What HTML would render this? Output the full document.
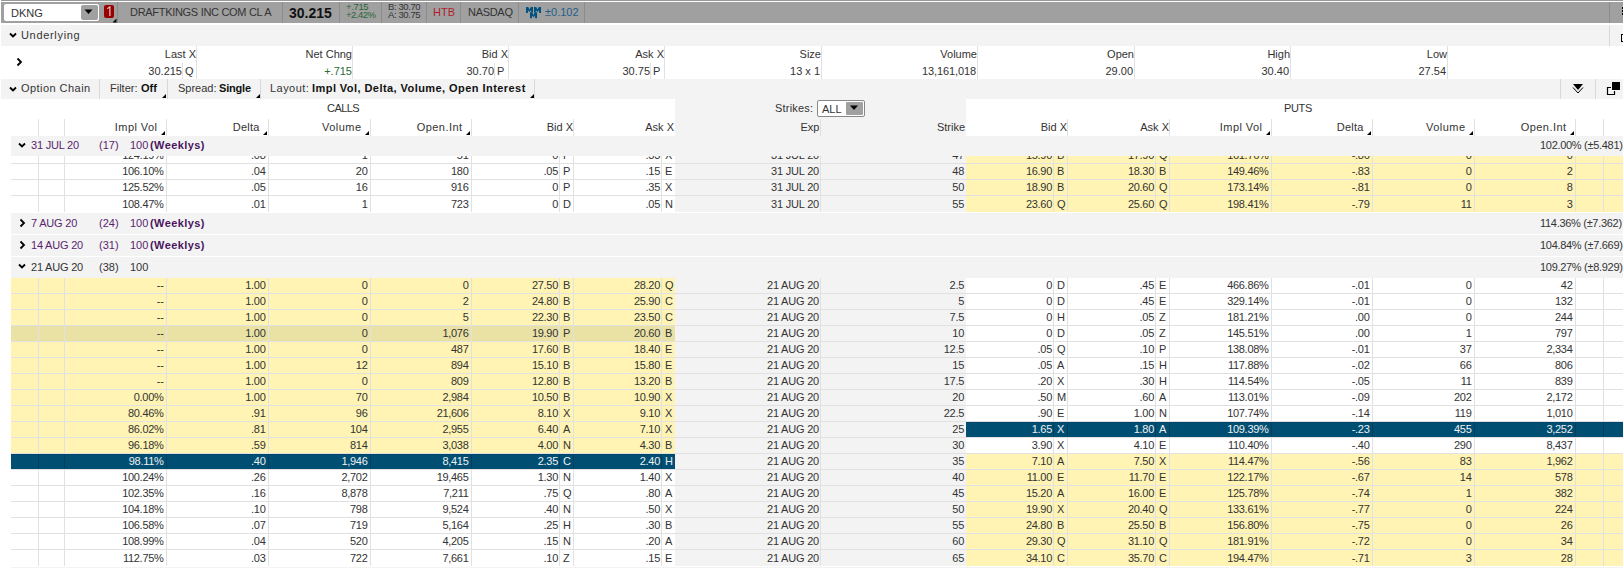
<!DOCTYPE html>
<html><head><meta charset="utf-8"><style>
html,body{margin:0;padding:0}
body{width:1623px;height:568px;overflow:hidden;background:#fff;position:relative;font-family:"Liberation Sans",sans-serif;font-size:11px;color:#333}
.a{position:absolute}
.t{position:absolute;white-space:nowrap;line-height:16px}
.r{text-align:right}
.c{text-align:center}
b{font-weight:bold}
</style></head><body>
<div class="a" style="left:1px;top:0px;width:1622px;height:1px;background:#999;"></div>
<div class="a" style="left:1px;top:2px;width:1622px;height:21px;background:#a0a0a0;"></div>
<div class="a" style="left:4px;top:4px;width:95px;height:17px;background:#fff;border-radius:2px;"></div>
<div class="a" style="left:81px;top:5px;width:17px;height:15px;background:#a0a0a0;border-radius:2px;"></div>
<svg class="a" style="left:84px;top:9px" width="9" height="6"><path d="M0.5 0.5H8.5L4.5 5Z" fill="#000"/></svg>
<div class="t" style="left:11px;top:5px;color:#333;">DKNG</div>
<div class="a" style="left:104px;top:5px;width:10px;height:13px;background:#990000;border-radius:2px;"></div>
<svg class="a" style="left:104px;top:5px" width="10" height="13"><path d="M3.2 3.6L5.9 2V11" stroke="#ddd" stroke-width="1.1" fill="none"/></svg>
<svg class="a" style="left:112px;top:18px" width="5" height="5"><path d="M4.5 0.5V4.5H0.5Z" fill="#000"/></svg>
<div class="a" style="left:117px;top:2px;width:1px;height:21px;background:#8c8c8c;"></div>
<div class="a" style="left:282px;top:2px;width:1px;height:21px;background:#8c8c8c;"></div>
<div class="a" style="left:339px;top:2px;width:1px;height:21px;background:#8c8c8c;"></div>
<div class="a" style="left:381px;top:2px;width:1px;height:21px;background:#8c8c8c;"></div>
<div class="a" style="left:426px;top:2px;width:1px;height:21px;background:#8c8c8c;"></div>
<div class="a" style="left:460px;top:2px;width:1px;height:21px;background:#8c8c8c;"></div>
<div class="a" style="left:518px;top:2px;width:1px;height:21px;background:#8c8c8c;"></div>
<div class="a" style="left:584px;top:2px;width:1px;height:21px;background:#8c8c8c;"></div>
<div class="a" style="left:1609px;top:2px;width:1px;height:21px;background:#8c8c8c;"></div>
<div class="t" style="left:130px;top:4px;color:#333;letter-spacing:-0.3px;">DRAFTKINGS INC COM CL A</div>
<div class="t" style="left:289px;top:5px;color:#111;font-weight:bold;font-size:14px;">30.215</div>
<div class="t" style="left:346px;top:-1px;color:#2a6637;font-size:9.5px;letter-spacing:-0.35px;">+.715</div>
<div class="t" style="left:346px;top:6.5px;color:#2a6637;font-size:9.5px;letter-spacing:-0.5px;">+2.42%</div>
<div class="t" style="left:388px;top:-1px;color:#333;font-size:9.5px;letter-spacing:-0.4px;">B: 30.70</div>
<div class="t" style="left:388px;top:6.5px;color:#333;font-size:9.5px;letter-spacing:-0.4px;">A: 30.75</div>
<div class="t" style="left:433px;top:4px;color:#b01c2e;">HTB</div>
<div class="t" style="left:468px;top:4px;color:#333;letter-spacing:-0.3px;">NASDAQ</div>
<svg class="a" style="left:525px;top:6px" width="18" height="14"><path fill="#00507f" d="M1 7V1H3.2L4.5 3.6L5.8 1H8V7H6.1V4L4.5 6.3L2.9 4V7ZM9 7V1H11.2L12.5 3.6L13.8 1H16V7H14.1V4L12.5 6.3L10.9 4V7Z"/><path fill="#00507f" stroke="#a0a0a0" stroke-width="0.6" paint-order="stroke" d="M5 12.3V6.3H7.2L8.5 8.9L9.8 6.3H12V12.3H10.1V9.3L8.5 11.6L6.9 9.3V12.3Z"/></svg>
<div class="t" style="left:545px;top:4px;color:#1f5f8a;">±0.102</div>
<div class="a" style="left:1px;top:25px;width:1622px;height:21px;background:#f3f3f3;"></div>
<svg class="a" style="left:9px;top:32px" width="8" height="7"><path d="M1 1.5L4 4.5L7 1.5" stroke="#000" stroke-width="1.8" fill="none"/></svg>
<div class="t" style="left:21px;top:27px;letter-spacing:0.68px;">Underlying</div>
<div class="a" style="left:1609px;top:26px;width:1px;height:20px;background:#d8d8d8;"></div>
<div class="a" style="left:1621px;top:34px;width:4px;height:6px;background:transparent;border:1px solid #000;box-sizing:content-box;"></div>
<div class="a" style="left:1622px;top:7px;width:1px;height:2px;background:#000;"></div>
<div class="a" style="left:1622px;top:10px;width:1px;height:2px;background:#000;"></div>
<div class="a" style="left:1622px;top:13px;width:1px;height:2px;background:#000;"></div>
<svg class="a" style="left:16px;top:57px" width="7" height="10"><path d="M1.5 1.5L5 5L1.5 8.5" stroke="#000" stroke-width="1.8" fill="none"/></svg>
<div class="a" style="left:196px;top:46px;width:1px;height:33px;background:#e1e1e1;"></div>
<div class="a" style="left:352px;top:46px;width:1px;height:33px;background:#e1e1e1;"></div>
<div class="a" style="left:508px;top:46px;width:1px;height:33px;background:#e1e1e1;"></div>
<div class="a" style="left:664px;top:46px;width:1px;height:33px;background:#e1e1e1;"></div>
<div class="a" style="left:821px;top:46px;width:1px;height:33px;background:#e1e1e1;"></div>
<div class="a" style="left:977px;top:46px;width:1px;height:33px;background:#e1e1e1;"></div>
<div class="a" style="left:1134px;top:46px;width:1px;height:33px;background:#e1e1e1;"></div>
<div class="a" style="left:1290px;top:46px;width:1px;height:33px;background:#e1e1e1;"></div>
<div class="a" style="left:1447px;top:46px;width:1px;height:33px;background:#e1e1e1;"></div>
<div class="a" style="left:182px;top:63px;width:1px;height:16px;background:#e1e1e1;"></div>
<div class="a" style="left:494px;top:63px;width:1px;height:16px;background:#e1e1e1;"></div>
<div class="a" style="left:650px;top:63px;width:1px;height:16px;background:#e1e1e1;"></div>
<div class="t r" style="left:-104px;top:46px;width:300px;">Last X</div>
<div class="t r" style="left:52px;top:46px;width:300px;">Net Chng</div>
<div class="t r" style="left:208px;top:46px;width:300px;">Bid X</div>
<div class="t r" style="left:364px;top:46px;width:300px;">Ask X</div>
<div class="t r" style="left:521px;top:46px;width:300px;">Size</div>
<div class="t r" style="left:677px;top:46px;width:300px;">Volume</div>
<div class="t r" style="left:834px;top:46px;width:300px;">Open</div>
<div class="t r" style="left:990px;top:46px;width:300px;">High</div>
<div class="t r" style="left:1147px;top:46px;width:300px;">Low</div>
<div class="t r" style="left:-118px;top:63px;width:300px;">30.215</div>
<div class="t" style="left:185px;top:63px;">Q</div>
<div class="t r" style="left:52px;top:63px;width:300px;color:#2e6b3a;">+.715</div>
<div class="t r" style="left:194px;top:63px;width:300px;">30.70</div>
<div class="t" style="left:497px;top:63px;">P</div>
<div class="t r" style="left:350px;top:63px;width:300px;">30.75</div>
<div class="t" style="left:653px;top:63px;">P</div>
<div class="t r" style="left:520px;top:63px;width:300px;">13 x 1</div>
<div class="t r" style="left:676px;top:63px;width:300px;letter-spacing:-0.1px;">13,161,018</div>
<div class="t r" style="left:833px;top:63px;width:300px;">29.00</div>
<div class="t r" style="left:989px;top:63px;width:300px;">30.40</div>
<div class="t r" style="left:1146px;top:63px;width:300px;">27.54</div>
<div class="a" style="left:1px;top:79px;width:1622px;height:20px;background:#f3f3f3;"></div>
<svg class="a" style="left:9px;top:86px" width="8" height="7"><path d="M1 1.5L4 4.5L7 1.5" stroke="#000" stroke-width="1.8" fill="none"/></svg>
<div class="t" style="left:21px;top:80px;letter-spacing:0.45px;">Option Chain</div>
<div class="t" style="left:110px;top:80px;letter-spacing:0px;">Filter:</div>
<div class="t" style="left:141px;top:80px;color:#111;font-weight:bold;">Off</div>
<div class="t" style="left:178px;top:80px;letter-spacing:0px;">Spread:</div>
<div class="t" style="left:219px;top:80px;color:#111;font-weight:bold;letter-spacing:-0.2px;">Single</div>
<div class="t" style="left:270px;top:80px;letter-spacing:0.45px;">Layout:</div>
<div class="t" style="left:312px;top:80px;color:#111;font-weight:bold;letter-spacing:0.44px;">Impl Vol, Delta, Volume, Open Interest</div>
<div class="a" style="left:99px;top:79px;width:1px;height:20px;background:#d8d8d8;"></div>
<div class="a" style="left:167px;top:79px;width:1px;height:20px;background:#d8d8d8;"></div>
<div class="a" style="left:260px;top:79px;width:1px;height:20px;background:#d8d8d8;"></div>
<div class="a" style="left:534px;top:79px;width:1px;height:20px;background:#d8d8d8;"></div>
<div class="a" style="left:1560px;top:79px;width:1px;height:20px;background:#d8d8d8;"></div>
<div class="a" style="left:1595px;top:79px;width:1px;height:20px;background:#d8d8d8;"></div>
<svg class="a" style="left:162px;top:94px" width="4" height="4"><path d="M4 0V4H0Z" fill="#000"/></svg>
<svg class="a" style="left:256px;top:94px" width="4" height="4"><path d="M4 0V4H0Z" fill="#000"/></svg>
<svg class="a" style="left:530px;top:94px" width="4" height="4"><path d="M4 0V4H0Z" fill="#000"/></svg>
<svg class="a" style="left:1572px;top:83px" width="12" height="11"><path d="M1 1H11L6 7Z" fill="#000"/><path d="M1 4.5L6 10L11 4.5" stroke="#000" stroke-width="1" fill="none"/></svg>
<svg class="a" style="left:1606px;top:81px" width="15" height="15"><rect x="6" y="1" width="8" height="8" fill="#000"/><path d="M5 6.5H1.5V13.5H8.5V10" stroke="#000" stroke-width="1.2" fill="none"/></svg>
<div class="a" style="left:675px;top:99px;width:291px;height:467px;background:#f3f3f3;"></div>
<div class="a" style="left:11px;top:567px;width:1612px;height:1px;background:#f3f3f3;"></div>
<div class="t c" style="left:143px;top:100px;width:400px;letter-spacing:-0.6px;">CALLS</div>
<div class="t c" style="left:1098px;top:100px;width:400px;letter-spacing:-0.3px;">PUTS</div>
<div class="t" style="left:775px;top:100px;letter-spacing:0.2px;">Strikes:</div>
<div class="a" style="left:817px;top:100px;width:46px;height:15px;background:#fff;border:1px solid #888;border-radius:2px;"></div>
<div class="t" style="left:822px;top:101px;">ALL</div>
<div class="a" style="left:846px;top:102px;width:17px;height:13px;background:#a0a0a0;border-radius:1px;"></div>
<svg class="a" style="left:850px;top:105px" width="8" height="6"><path d="M0 0.5H8L4 5Z" fill="#000"/></svg>
<div class="a" style="left:38px;top:119px;width:1px;height:17px;background:#e1e1e1;"></div>
<div class="a" style="left:64px;top:119px;width:1px;height:17px;background:#e1e1e1;"></div>
<div class="a" style="left:166px;top:119px;width:1px;height:17px;background:#e1e1e1;"></div>
<div class="a" style="left:268px;top:119px;width:1px;height:17px;background:#e1e1e1;"></div>
<div class="a" style="left:370px;top:119px;width:1px;height:17px;background:#e1e1e1;"></div>
<div class="a" style="left:471px;top:119px;width:1px;height:17px;background:#e1e1e1;"></div>
<div class="a" style="left:573px;top:119px;width:1px;height:17px;background:#e1e1e1;"></div>
<div class="a" style="left:820px;top:119px;width:1px;height:17px;background:#e1e1e1;"></div>
<div class="a" style="left:1067px;top:119px;width:1px;height:17px;background:#e1e1e1;"></div>
<div class="a" style="left:1169px;top:119px;width:1px;height:17px;background:#e1e1e1;"></div>
<div class="a" style="left:1271px;top:119px;width:1px;height:17px;background:#e1e1e1;"></div>
<div class="a" style="left:1372px;top:119px;width:1px;height:17px;background:#e1e1e1;"></div>
<div class="a" style="left:1474px;top:119px;width:1px;height:17px;background:#e1e1e1;"></div>
<div class="a" style="left:1575px;top:119px;width:1px;height:17px;background:#e1e1e1;"></div>
<div class="a" style="left:1603px;top:119px;width:1px;height:17px;background:#e1e1e1;"></div>
<div class="t r" style="left:-142.5px;top:119px;width:300px;letter-spacing:0.45px;">Impl Vol</div>
<svg class="a" style="left:161px;top:131px" width="4" height="4"><path d="M4 0V4H0Z" fill="#000"/></svg>
<div class="t r" style="left:-40.5px;top:119px;width:300px;letter-spacing:0.2px;">Delta</div>
<svg class="a" style="left:263px;top:131px" width="4" height="4"><path d="M4 0V4H0Z" fill="#000"/></svg>
<div class="t r" style="left:61.5px;top:119px;width:300px;letter-spacing:0.45px;">Volume</div>
<svg class="a" style="left:365px;top:131px" width="4" height="4"><path d="M4 0V4H0Z" fill="#000"/></svg>
<div class="t r" style="left:162.5px;top:119px;width:300px;letter-spacing:0.45px;">Open.Int</div>
<svg class="a" style="left:466px;top:131px" width="4" height="4"><path d="M4 0V4H0Z" fill="#000"/></svg>
<div class="t r" style="left:273px;top:119px;width:300px;">Bid X</div>
<div class="t r" style="left:374px;top:119px;width:300px;">Ask X</div>
<div class="t r" style="left:519.5px;top:119px;width:300px;">Exp</div>
<div class="t r" style="left:665px;top:119px;width:300px;">Strike</div>
<div class="t r" style="left:767px;top:119px;width:300px;">Bid X</div>
<div class="t r" style="left:869px;top:119px;width:300px;">Ask X</div>
<div class="t r" style="left:962.5px;top:119px;width:300px;letter-spacing:0.45px;">Impl Vol</div>
<svg class="a" style="left:1266px;top:131px" width="4" height="4"><path d="M4 0V4H0Z" fill="#000"/></svg>
<div class="t r" style="left:1063.5px;top:119px;width:300px;letter-spacing:0.2px;">Delta</div>
<svg class="a" style="left:1367px;top:131px" width="4" height="4"><path d="M4 0V4H0Z" fill="#000"/></svg>
<div class="t r" style="left:1165.5px;top:119px;width:300px;letter-spacing:0.45px;">Volume</div>
<svg class="a" style="left:1469px;top:131px" width="4" height="4"><path d="M4 0V4H0Z" fill="#000"/></svg>
<div class="t r" style="left:1266.5px;top:119px;width:300px;letter-spacing:0.45px;">Open.Int</div>
<svg class="a" style="left:1570px;top:131px" width="4" height="4"><path d="M4 0V4H0Z" fill="#000"/></svg>
<div class="a" style="left:966px;top:148px;width:657px;height:15px;background:#fff4b4;"></div>
<div class="t r" style="left:-136.5px;top:147px;width:300px;color:#333;letter-spacing:-0.3px;">124.19%</div>
<div class="t r" style="left:-34.5px;top:147px;width:300px;color:#333;letter-spacing:-0.3px;">.08</div>
<div class="t r" style="left:67.5px;top:147px;width:300px;color:#333;letter-spacing:-0.3px;">1</div>
<div class="t r" style="left:168.5px;top:147px;width:300px;color:#333;letter-spacing:-0.3px;">51</div>
<div class="t r" style="left:258px;top:147px;width:300px;color:#333;letter-spacing:-0.3px;">0</div>
<div class="t r" style="left:360px;top:147px;width:300px;color:#333;letter-spacing:-0.3px;">.33</div>
<div class="t" style="left:563px;top:147px;color:#333;">P</div>
<div class="t" style="left:665px;top:147px;color:#333;">X</div>
<div class="t r" style="left:519px;top:147px;width:300px;letter-spacing:-0.2px;">31 JUL 20</div>
<div class="t r" style="left:664px;top:147px;width:300px;letter-spacing:-0.3px;">47</div>
<div class="t r" style="left:752px;top:147px;width:300px;color:#333;letter-spacing:-0.3px;">15.90</div>
<div class="t r" style="left:854px;top:147px;width:300px;color:#333;letter-spacing:-0.3px;">17.90</div>
<div class="t r" style="left:968.5px;top:147px;width:300px;color:#333;letter-spacing:-0.3px;">161.76%</div>
<div class="t r" style="left:1069.5px;top:147px;width:300px;color:#333;letter-spacing:-0.3px;">-.86</div>
<div class="t r" style="left:1171.5px;top:147px;width:300px;color:#333;letter-spacing:-0.3px;">0</div>
<div class="t r" style="left:1272.5px;top:147px;width:300px;color:#333;letter-spacing:-0.3px;">0</div>
<div class="t" style="left:1057px;top:147px;color:#333;">B</div>
<div class="t" style="left:1159px;top:147px;color:#333;">Q</div>
<div class="a" style="left:966px;top:164px;width:657px;height:15px;background:#fff4b4;"></div>
<div class="t r" style="left:-136.5px;top:163px;width:300px;color:#333;letter-spacing:-0.3px;">106.10%</div>
<div class="t r" style="left:-34.5px;top:163px;width:300px;color:#333;letter-spacing:-0.3px;">.04</div>
<div class="t r" style="left:67.5px;top:163px;width:300px;color:#333;letter-spacing:-0.3px;">20</div>
<div class="t r" style="left:168.5px;top:163px;width:300px;color:#333;letter-spacing:-0.3px;">180</div>
<div class="t r" style="left:258px;top:163px;width:300px;color:#333;letter-spacing:-0.3px;">.05</div>
<div class="t r" style="left:360px;top:163px;width:300px;color:#333;letter-spacing:-0.3px;">.15</div>
<div class="t" style="left:563px;top:163px;color:#333;">P</div>
<div class="t" style="left:665px;top:163px;color:#333;">E</div>
<div class="t r" style="left:519px;top:163px;width:300px;letter-spacing:-0.2px;">31 JUL 20</div>
<div class="t r" style="left:664px;top:163px;width:300px;letter-spacing:-0.3px;">48</div>
<div class="t r" style="left:752px;top:163px;width:300px;color:#333;letter-spacing:-0.3px;">16.90</div>
<div class="t r" style="left:854px;top:163px;width:300px;color:#333;letter-spacing:-0.3px;">18.30</div>
<div class="t r" style="left:968.5px;top:163px;width:300px;color:#333;letter-spacing:-0.3px;">149.46%</div>
<div class="t r" style="left:1069.5px;top:163px;width:300px;color:#333;letter-spacing:-0.3px;">-.83</div>
<div class="t r" style="left:1171.5px;top:163px;width:300px;color:#333;letter-spacing:-0.3px;">0</div>
<div class="t r" style="left:1272.5px;top:163px;width:300px;color:#333;letter-spacing:-0.3px;">2</div>
<div class="t" style="left:1057px;top:163px;color:#333;">B</div>
<div class="t" style="left:1159px;top:163px;color:#333;">B</div>
<div class="a" style="left:966px;top:180px;width:657px;height:15px;background:#fff4b4;"></div>
<div class="t r" style="left:-136.5px;top:179px;width:300px;color:#333;letter-spacing:-0.3px;">125.52%</div>
<div class="t r" style="left:-34.5px;top:179px;width:300px;color:#333;letter-spacing:-0.3px;">.05</div>
<div class="t r" style="left:67.5px;top:179px;width:300px;color:#333;letter-spacing:-0.3px;">16</div>
<div class="t r" style="left:168.5px;top:179px;width:300px;color:#333;letter-spacing:-0.3px;">916</div>
<div class="t r" style="left:258px;top:179px;width:300px;color:#333;letter-spacing:-0.3px;">0</div>
<div class="t r" style="left:360px;top:179px;width:300px;color:#333;letter-spacing:-0.3px;">.35</div>
<div class="t" style="left:563px;top:179px;color:#333;">P</div>
<div class="t" style="left:665px;top:179px;color:#333;">X</div>
<div class="t r" style="left:519px;top:179px;width:300px;letter-spacing:-0.2px;">31 JUL 20</div>
<div class="t r" style="left:664px;top:179px;width:300px;letter-spacing:-0.3px;">50</div>
<div class="t r" style="left:752px;top:179px;width:300px;color:#333;letter-spacing:-0.3px;">18.90</div>
<div class="t r" style="left:854px;top:179px;width:300px;color:#333;letter-spacing:-0.3px;">20.60</div>
<div class="t r" style="left:968.5px;top:179px;width:300px;color:#333;letter-spacing:-0.3px;">173.14%</div>
<div class="t r" style="left:1069.5px;top:179px;width:300px;color:#333;letter-spacing:-0.3px;">-.81</div>
<div class="t r" style="left:1171.5px;top:179px;width:300px;color:#333;letter-spacing:-0.3px;">0</div>
<div class="t r" style="left:1272.5px;top:179px;width:300px;color:#333;letter-spacing:-0.3px;">8</div>
<div class="t" style="left:1057px;top:179px;color:#333;">B</div>
<div class="t" style="left:1159px;top:179px;color:#333;">Q</div>
<div class="a" style="left:966px;top:196px;width:657px;height:16px;background:#fff4b4;"></div>
<div class="t r" style="left:-136.5px;top:196px;width:300px;color:#333;letter-spacing:-0.3px;">108.47%</div>
<div class="t r" style="left:-34.5px;top:196px;width:300px;color:#333;letter-spacing:-0.3px;">.01</div>
<div class="t r" style="left:67.5px;top:196px;width:300px;color:#333;letter-spacing:-0.3px;">1</div>
<div class="t r" style="left:168.5px;top:196px;width:300px;color:#333;letter-spacing:-0.3px;">723</div>
<div class="t r" style="left:258px;top:196px;width:300px;color:#333;letter-spacing:-0.3px;">0</div>
<div class="t r" style="left:360px;top:196px;width:300px;color:#333;letter-spacing:-0.3px;">.05</div>
<div class="t" style="left:563px;top:196px;color:#333;">D</div>
<div class="t" style="left:665px;top:196px;color:#333;">N</div>
<div class="t r" style="left:519px;top:196px;width:300px;letter-spacing:-0.2px;">31 JUL 20</div>
<div class="t r" style="left:664px;top:196px;width:300px;letter-spacing:-0.3px;">55</div>
<div class="t r" style="left:752px;top:196px;width:300px;color:#333;letter-spacing:-0.3px;">23.60</div>
<div class="t r" style="left:854px;top:196px;width:300px;color:#333;letter-spacing:-0.3px;">25.60</div>
<div class="t r" style="left:968.5px;top:196px;width:300px;color:#333;letter-spacing:-0.3px;">198.41%</div>
<div class="t r" style="left:1069.5px;top:196px;width:300px;color:#333;letter-spacing:-0.3px;">-.79</div>
<div class="t r" style="left:1171.5px;top:196px;width:300px;color:#333;letter-spacing:-0.3px;">11</div>
<div class="t r" style="left:1272.5px;top:196px;width:300px;color:#333;letter-spacing:-0.3px;">3</div>
<div class="t" style="left:1057px;top:196px;color:#333;">Q</div>
<div class="t" style="left:1159px;top:196px;color:#333;">Q</div>
<div class="a" style="left:11px;top:163px;width:1612px;height:1px;background:#e1e1e1;"></div>
<div class="a" style="left:11px;top:179px;width:1612px;height:1px;background:#e1e1e1;"></div>
<div class="a" style="left:11px;top:195px;width:1612px;height:1px;background:#e1e1e1;"></div>
<div class="a" style="left:38px;top:148px;width:1px;height:64px;background:#e1e1e1;"></div>
<div class="a" style="left:64px;top:148px;width:1px;height:64px;background:#e1e1e1;"></div>
<div class="a" style="left:166px;top:148px;width:1px;height:64px;background:#e1e1e1;"></div>
<div class="a" style="left:268px;top:148px;width:1px;height:64px;background:#e1e1e1;"></div>
<div class="a" style="left:370px;top:148px;width:1px;height:64px;background:#e1e1e1;"></div>
<div class="a" style="left:471px;top:148px;width:1px;height:64px;background:#e1e1e1;"></div>
<div class="a" style="left:559px;top:148px;width:1px;height:64px;background:#e1e1e1;"></div>
<div class="a" style="left:573px;top:148px;width:1px;height:64px;background:#e1e1e1;"></div>
<div class="a" style="left:661px;top:148px;width:1px;height:64px;background:#e1e1e1;"></div>
<div class="a" style="left:820px;top:148px;width:1px;height:64px;background:#e1e1e1;"></div>
<div class="a" style="left:1053px;top:148px;width:1px;height:64px;background:#e1e1e1;"></div>
<div class="a" style="left:1067px;top:148px;width:1px;height:64px;background:#e1e1e1;"></div>
<div class="a" style="left:1155px;top:148px;width:1px;height:64px;background:#e1e1e1;"></div>
<div class="a" style="left:1169px;top:148px;width:1px;height:64px;background:#e1e1e1;"></div>
<div class="a" style="left:1271px;top:148px;width:1px;height:64px;background:#e1e1e1;"></div>
<div class="a" style="left:1372px;top:148px;width:1px;height:64px;background:#e1e1e1;"></div>
<div class="a" style="left:1474px;top:148px;width:1px;height:64px;background:#e1e1e1;"></div>
<div class="a" style="left:1575px;top:148px;width:1px;height:64px;background:#e1e1e1;"></div>
<div class="a" style="left:1603px;top:148px;width:1px;height:64px;background:#e1e1e1;"></div>
<div class="a" style="left:11px;top:136px;width:1612px;height:20px;background:#f3f3f3;"></div>
<svg class="a" style="left:18px;top:142px" width="8" height="7"><path d="M1 1.5L4 4.5L7 1.5" stroke="#000" stroke-width="1.8" fill="none"/></svg>
<div class="t" style="left:31px;top:137px;color:#5a1f6e;letter-spacing:-0.2px;">31 JUL 20</div>
<div class="t" style="left:99px;top:137px;color:#5a1f6e;">(17)</div>
<div class="t" style="left:130px;top:137px;color:#5a1f6e;">100</div>
<div class="t" style="left:150px;top:137px;color:#4a1660;font-weight:bold;letter-spacing:0.4px;">(Weeklys)</div>
<div class="t" style="left:1540px;top:137px;letter-spacing:-0.3px;">102.00% (±5.481)</div>
<div class="a" style="left:11px;top:213px;width:1612px;height:21px;background:#f3f3f3;"></div>
<svg class="a" style="left:19px;top:218px" width="7" height="10"><path d="M1.5 1.5L5 5L1.5 8.5" stroke="#000" stroke-width="1.8" fill="none"/></svg>
<div class="t" style="left:31px;top:215px;color:#5a1f6e;letter-spacing:-0.2px;">7 AUG 20</div>
<div class="t" style="left:99px;top:215px;color:#5a1f6e;">(24)</div>
<div class="t" style="left:130px;top:215px;color:#5a1f6e;">100</div>
<div class="t" style="left:150px;top:215px;color:#4a1660;font-weight:bold;letter-spacing:0.4px;">(Weeklys)</div>
<div class="t" style="left:1540px;top:215px;letter-spacing:-0.3px;">114.36% (±7.362)</div>
<div class="a" style="left:11px;top:235px;width:1612px;height:21px;background:#f3f3f3;"></div>
<svg class="a" style="left:19px;top:240px" width="7" height="10"><path d="M1.5 1.5L5 5L1.5 8.5" stroke="#000" stroke-width="1.8" fill="none"/></svg>
<div class="t" style="left:31px;top:237px;color:#5a1f6e;letter-spacing:-0.2px;">14 AUG 20</div>
<div class="t" style="left:99px;top:237px;color:#5a1f6e;">(31)</div>
<div class="t" style="left:130px;top:237px;color:#5a1f6e;">100</div>
<div class="t" style="left:150px;top:237px;color:#4a1660;font-weight:bold;letter-spacing:0.4px;">(Weeklys)</div>
<div class="t" style="left:1540px;top:237px;letter-spacing:-0.3px;">104.84% (±7.669)</div>
<div class="a" style="left:11px;top:257px;width:1612px;height:21px;background:#f3f3f3;"></div>
<svg class="a" style="left:18px;top:263px" width="8" height="7"><path d="M1 1.5L4 4.5L7 1.5" stroke="#000" stroke-width="1.8" fill="none"/></svg>
<div class="t" style="left:31px;top:259px;color:#333;letter-spacing:-0.2px;">21 AUG 20</div>
<div class="t" style="left:99px;top:259px;color:#333;">(38)</div>
<div class="t" style="left:130px;top:259px;color:#333;">100</div>
<div class="t" style="left:1540px;top:259px;letter-spacing:-0.3px;">109.27% (±8.929)</div>
<div class="a" style="left:11px;top:278px;width:664px;height:15px;background:#fff4b4;"></div>
<div class="t r" style="left:-136.5px;top:277px;width:300px;color:#333;letter-spacing:-0.3px;">--</div>
<div class="t r" style="left:-34.5px;top:277px;width:300px;color:#333;letter-spacing:-0.3px;">1.00</div>
<div class="t r" style="left:67.5px;top:277px;width:300px;color:#333;letter-spacing:-0.3px;">0</div>
<div class="t r" style="left:168.5px;top:277px;width:300px;color:#333;letter-spacing:-0.3px;">0</div>
<div class="t r" style="left:258px;top:277px;width:300px;color:#333;letter-spacing:-0.3px;">27.50</div>
<div class="t r" style="left:360px;top:277px;width:300px;color:#333;letter-spacing:-0.3px;">28.20</div>
<div class="t" style="left:563px;top:277px;color:#333;">B</div>
<div class="t" style="left:665px;top:277px;color:#333;">Q</div>
<div class="t r" style="left:519px;top:277px;width:300px;letter-spacing:-0.2px;">21 AUG 20</div>
<div class="t r" style="left:664px;top:277px;width:300px;letter-spacing:-0.3px;">2.5</div>
<div class="t r" style="left:752px;top:277px;width:300px;color:#333;letter-spacing:-0.3px;">0</div>
<div class="t r" style="left:854px;top:277px;width:300px;color:#333;letter-spacing:-0.3px;">.45</div>
<div class="t r" style="left:968.5px;top:277px;width:300px;color:#333;letter-spacing:-0.3px;">466.86%</div>
<div class="t r" style="left:1069.5px;top:277px;width:300px;color:#333;letter-spacing:-0.3px;">-.01</div>
<div class="t r" style="left:1171.5px;top:277px;width:300px;color:#333;letter-spacing:-0.3px;">0</div>
<div class="t r" style="left:1272.5px;top:277px;width:300px;color:#333;letter-spacing:-0.3px;">42</div>
<div class="t" style="left:1057px;top:277px;color:#333;">D</div>
<div class="t" style="left:1159px;top:277px;color:#333;">E</div>
<div class="a" style="left:11px;top:294px;width:664px;height:15px;background:#fff4b4;"></div>
<div class="t r" style="left:-136.5px;top:293px;width:300px;color:#333;letter-spacing:-0.3px;">--</div>
<div class="t r" style="left:-34.5px;top:293px;width:300px;color:#333;letter-spacing:-0.3px;">1.00</div>
<div class="t r" style="left:67.5px;top:293px;width:300px;color:#333;letter-spacing:-0.3px;">0</div>
<div class="t r" style="left:168.5px;top:293px;width:300px;color:#333;letter-spacing:-0.3px;">2</div>
<div class="t r" style="left:258px;top:293px;width:300px;color:#333;letter-spacing:-0.3px;">24.80</div>
<div class="t r" style="left:360px;top:293px;width:300px;color:#333;letter-spacing:-0.3px;">25.90</div>
<div class="t" style="left:563px;top:293px;color:#333;">B</div>
<div class="t" style="left:665px;top:293px;color:#333;">C</div>
<div class="t r" style="left:519px;top:293px;width:300px;letter-spacing:-0.2px;">21 AUG 20</div>
<div class="t r" style="left:664px;top:293px;width:300px;letter-spacing:-0.3px;">5</div>
<div class="t r" style="left:752px;top:293px;width:300px;color:#333;letter-spacing:-0.3px;">0</div>
<div class="t r" style="left:854px;top:293px;width:300px;color:#333;letter-spacing:-0.3px;">.45</div>
<div class="t r" style="left:968.5px;top:293px;width:300px;color:#333;letter-spacing:-0.3px;">329.14%</div>
<div class="t r" style="left:1069.5px;top:293px;width:300px;color:#333;letter-spacing:-0.3px;">-.01</div>
<div class="t r" style="left:1171.5px;top:293px;width:300px;color:#333;letter-spacing:-0.3px;">0</div>
<div class="t r" style="left:1272.5px;top:293px;width:300px;color:#333;letter-spacing:-0.3px;">132</div>
<div class="t" style="left:1057px;top:293px;color:#333;">D</div>
<div class="t" style="left:1159px;top:293px;color:#333;">E</div>
<div class="a" style="left:11px;top:310px;width:664px;height:15px;background:#fff4b4;"></div>
<div class="t r" style="left:-136.5px;top:309px;width:300px;color:#333;letter-spacing:-0.3px;">--</div>
<div class="t r" style="left:-34.5px;top:309px;width:300px;color:#333;letter-spacing:-0.3px;">1.00</div>
<div class="t r" style="left:67.5px;top:309px;width:300px;color:#333;letter-spacing:-0.3px;">0</div>
<div class="t r" style="left:168.5px;top:309px;width:300px;color:#333;letter-spacing:-0.3px;">5</div>
<div class="t r" style="left:258px;top:309px;width:300px;color:#333;letter-spacing:-0.3px;">22.30</div>
<div class="t r" style="left:360px;top:309px;width:300px;color:#333;letter-spacing:-0.3px;">23.50</div>
<div class="t" style="left:563px;top:309px;color:#333;">B</div>
<div class="t" style="left:665px;top:309px;color:#333;">C</div>
<div class="t r" style="left:519px;top:309px;width:300px;letter-spacing:-0.2px;">21 AUG 20</div>
<div class="t r" style="left:664px;top:309px;width:300px;letter-spacing:-0.3px;">7.5</div>
<div class="t r" style="left:752px;top:309px;width:300px;color:#333;letter-spacing:-0.3px;">0</div>
<div class="t r" style="left:854px;top:309px;width:300px;color:#333;letter-spacing:-0.3px;">.05</div>
<div class="t r" style="left:968.5px;top:309px;width:300px;color:#333;letter-spacing:-0.3px;">181.21%</div>
<div class="t r" style="left:1069.5px;top:309px;width:300px;color:#333;letter-spacing:-0.3px;">.00</div>
<div class="t r" style="left:1171.5px;top:309px;width:300px;color:#333;letter-spacing:-0.3px;">0</div>
<div class="t r" style="left:1272.5px;top:309px;width:300px;color:#333;letter-spacing:-0.3px;">244</div>
<div class="t" style="left:1057px;top:309px;color:#333;">H</div>
<div class="t" style="left:1159px;top:309px;color:#333;">Z</div>
<div class="a" style="left:11px;top:326px;width:664px;height:15px;background:#eae2a5;"></div>
<div class="t r" style="left:-136.5px;top:325px;width:300px;color:#333;letter-spacing:-0.3px;">--</div>
<div class="t r" style="left:-34.5px;top:325px;width:300px;color:#333;letter-spacing:-0.3px;">1.00</div>
<div class="t r" style="left:67.5px;top:325px;width:300px;color:#333;letter-spacing:-0.3px;">0</div>
<div class="t r" style="left:168.5px;top:325px;width:300px;color:#333;letter-spacing:-0.3px;">1,076</div>
<div class="t r" style="left:258px;top:325px;width:300px;color:#333;letter-spacing:-0.3px;">19.90</div>
<div class="t r" style="left:360px;top:325px;width:300px;color:#333;letter-spacing:-0.3px;">20.60</div>
<div class="t" style="left:563px;top:325px;color:#333;">P</div>
<div class="t" style="left:665px;top:325px;color:#333;">B</div>
<div class="t r" style="left:519px;top:325px;width:300px;letter-spacing:-0.2px;">21 AUG 20</div>
<div class="t r" style="left:664px;top:325px;width:300px;letter-spacing:-0.3px;">10</div>
<div class="t r" style="left:752px;top:325px;width:300px;color:#333;letter-spacing:-0.3px;">0</div>
<div class="t r" style="left:854px;top:325px;width:300px;color:#333;letter-spacing:-0.3px;">.05</div>
<div class="t r" style="left:968.5px;top:325px;width:300px;color:#333;letter-spacing:-0.3px;">145.51%</div>
<div class="t r" style="left:1069.5px;top:325px;width:300px;color:#333;letter-spacing:-0.3px;">.00</div>
<div class="t r" style="left:1171.5px;top:325px;width:300px;color:#333;letter-spacing:-0.3px;">1</div>
<div class="t r" style="left:1272.5px;top:325px;width:300px;color:#333;letter-spacing:-0.3px;">797</div>
<div class="t" style="left:1057px;top:325px;color:#333;">D</div>
<div class="t" style="left:1159px;top:325px;color:#333;">Z</div>
<div class="a" style="left:11px;top:342px;width:664px;height:15px;background:#fff4b4;"></div>
<div class="t r" style="left:-136.5px;top:341px;width:300px;color:#333;letter-spacing:-0.3px;">--</div>
<div class="t r" style="left:-34.5px;top:341px;width:300px;color:#333;letter-spacing:-0.3px;">1.00</div>
<div class="t r" style="left:67.5px;top:341px;width:300px;color:#333;letter-spacing:-0.3px;">0</div>
<div class="t r" style="left:168.5px;top:341px;width:300px;color:#333;letter-spacing:-0.3px;">487</div>
<div class="t r" style="left:258px;top:341px;width:300px;color:#333;letter-spacing:-0.3px;">17.60</div>
<div class="t r" style="left:360px;top:341px;width:300px;color:#333;letter-spacing:-0.3px;">18.40</div>
<div class="t" style="left:563px;top:341px;color:#333;">B</div>
<div class="t" style="left:665px;top:341px;color:#333;">E</div>
<div class="t r" style="left:519px;top:341px;width:300px;letter-spacing:-0.2px;">21 AUG 20</div>
<div class="t r" style="left:664px;top:341px;width:300px;letter-spacing:-0.3px;">12.5</div>
<div class="t r" style="left:752px;top:341px;width:300px;color:#333;letter-spacing:-0.3px;">.05</div>
<div class="t r" style="left:854px;top:341px;width:300px;color:#333;letter-spacing:-0.3px;">.10</div>
<div class="t r" style="left:968.5px;top:341px;width:300px;color:#333;letter-spacing:-0.3px;">138.08%</div>
<div class="t r" style="left:1069.5px;top:341px;width:300px;color:#333;letter-spacing:-0.3px;">-.01</div>
<div class="t r" style="left:1171.5px;top:341px;width:300px;color:#333;letter-spacing:-0.3px;">37</div>
<div class="t r" style="left:1272.5px;top:341px;width:300px;color:#333;letter-spacing:-0.3px;">2,334</div>
<div class="t" style="left:1057px;top:341px;color:#333;">Q</div>
<div class="t" style="left:1159px;top:341px;color:#333;">P</div>
<div class="a" style="left:11px;top:358px;width:664px;height:15px;background:#fff4b4;"></div>
<div class="t r" style="left:-136.5px;top:357px;width:300px;color:#333;letter-spacing:-0.3px;">--</div>
<div class="t r" style="left:-34.5px;top:357px;width:300px;color:#333;letter-spacing:-0.3px;">1.00</div>
<div class="t r" style="left:67.5px;top:357px;width:300px;color:#333;letter-spacing:-0.3px;">12</div>
<div class="t r" style="left:168.5px;top:357px;width:300px;color:#333;letter-spacing:-0.3px;">894</div>
<div class="t r" style="left:258px;top:357px;width:300px;color:#333;letter-spacing:-0.3px;">15.10</div>
<div class="t r" style="left:360px;top:357px;width:300px;color:#333;letter-spacing:-0.3px;">15.80</div>
<div class="t" style="left:563px;top:357px;color:#333;">B</div>
<div class="t" style="left:665px;top:357px;color:#333;">E</div>
<div class="t r" style="left:519px;top:357px;width:300px;letter-spacing:-0.2px;">21 AUG 20</div>
<div class="t r" style="left:664px;top:357px;width:300px;letter-spacing:-0.3px;">15</div>
<div class="t r" style="left:752px;top:357px;width:300px;color:#333;letter-spacing:-0.3px;">.05</div>
<div class="t r" style="left:854px;top:357px;width:300px;color:#333;letter-spacing:-0.3px;">.15</div>
<div class="t r" style="left:968.5px;top:357px;width:300px;color:#333;letter-spacing:-0.3px;">117.88%</div>
<div class="t r" style="left:1069.5px;top:357px;width:300px;color:#333;letter-spacing:-0.3px;">-.02</div>
<div class="t r" style="left:1171.5px;top:357px;width:300px;color:#333;letter-spacing:-0.3px;">66</div>
<div class="t r" style="left:1272.5px;top:357px;width:300px;color:#333;letter-spacing:-0.3px;">806</div>
<div class="t" style="left:1057px;top:357px;color:#333;">A</div>
<div class="t" style="left:1159px;top:357px;color:#333;">H</div>
<div class="a" style="left:11px;top:374px;width:664px;height:15px;background:#fff4b4;"></div>
<div class="t r" style="left:-136.5px;top:373px;width:300px;color:#333;letter-spacing:-0.3px;">--</div>
<div class="t r" style="left:-34.5px;top:373px;width:300px;color:#333;letter-spacing:-0.3px;">1.00</div>
<div class="t r" style="left:67.5px;top:373px;width:300px;color:#333;letter-spacing:-0.3px;">0</div>
<div class="t r" style="left:168.5px;top:373px;width:300px;color:#333;letter-spacing:-0.3px;">809</div>
<div class="t r" style="left:258px;top:373px;width:300px;color:#333;letter-spacing:-0.3px;">12.80</div>
<div class="t r" style="left:360px;top:373px;width:300px;color:#333;letter-spacing:-0.3px;">13.20</div>
<div class="t" style="left:563px;top:373px;color:#333;">B</div>
<div class="t" style="left:665px;top:373px;color:#333;">B</div>
<div class="t r" style="left:519px;top:373px;width:300px;letter-spacing:-0.2px;">21 AUG 20</div>
<div class="t r" style="left:664px;top:373px;width:300px;letter-spacing:-0.3px;">17.5</div>
<div class="t r" style="left:752px;top:373px;width:300px;color:#333;letter-spacing:-0.3px;">.20</div>
<div class="t r" style="left:854px;top:373px;width:300px;color:#333;letter-spacing:-0.3px;">.30</div>
<div class="t r" style="left:968.5px;top:373px;width:300px;color:#333;letter-spacing:-0.3px;">114.54%</div>
<div class="t r" style="left:1069.5px;top:373px;width:300px;color:#333;letter-spacing:-0.3px;">-.05</div>
<div class="t r" style="left:1171.5px;top:373px;width:300px;color:#333;letter-spacing:-0.3px;">11</div>
<div class="t r" style="left:1272.5px;top:373px;width:300px;color:#333;letter-spacing:-0.3px;">839</div>
<div class="t" style="left:1057px;top:373px;color:#333;">X</div>
<div class="t" style="left:1159px;top:373px;color:#333;">H</div>
<div class="a" style="left:11px;top:390px;width:664px;height:15px;background:#fff4b4;"></div>
<div class="t r" style="left:-136.5px;top:389px;width:300px;color:#333;letter-spacing:-0.3px;">0.00%</div>
<div class="t r" style="left:-34.5px;top:389px;width:300px;color:#333;letter-spacing:-0.3px;">1.00</div>
<div class="t r" style="left:67.5px;top:389px;width:300px;color:#333;letter-spacing:-0.3px;">70</div>
<div class="t r" style="left:168.5px;top:389px;width:300px;color:#333;letter-spacing:-0.3px;">2,984</div>
<div class="t r" style="left:258px;top:389px;width:300px;color:#333;letter-spacing:-0.3px;">10.50</div>
<div class="t r" style="left:360px;top:389px;width:300px;color:#333;letter-spacing:-0.3px;">10.90</div>
<div class="t" style="left:563px;top:389px;color:#333;">B</div>
<div class="t" style="left:665px;top:389px;color:#333;">X</div>
<div class="t r" style="left:519px;top:389px;width:300px;letter-spacing:-0.2px;">21 AUG 20</div>
<div class="t r" style="left:664px;top:389px;width:300px;letter-spacing:-0.3px;">20</div>
<div class="t r" style="left:752px;top:389px;width:300px;color:#333;letter-spacing:-0.3px;">.50</div>
<div class="t r" style="left:854px;top:389px;width:300px;color:#333;letter-spacing:-0.3px;">.60</div>
<div class="t r" style="left:968.5px;top:389px;width:300px;color:#333;letter-spacing:-0.3px;">113.01%</div>
<div class="t r" style="left:1069.5px;top:389px;width:300px;color:#333;letter-spacing:-0.3px;">-.09</div>
<div class="t r" style="left:1171.5px;top:389px;width:300px;color:#333;letter-spacing:-0.3px;">202</div>
<div class="t r" style="left:1272.5px;top:389px;width:300px;color:#333;letter-spacing:-0.3px;">2,172</div>
<div class="t" style="left:1057px;top:389px;color:#333;">M</div>
<div class="t" style="left:1159px;top:389px;color:#333;">A</div>
<div class="a" style="left:11px;top:406px;width:664px;height:15px;background:#fff4b4;"></div>
<div class="t r" style="left:-136.5px;top:405px;width:300px;color:#333;letter-spacing:-0.3px;">80.46%</div>
<div class="t r" style="left:-34.5px;top:405px;width:300px;color:#333;letter-spacing:-0.3px;">.91</div>
<div class="t r" style="left:67.5px;top:405px;width:300px;color:#333;letter-spacing:-0.3px;">96</div>
<div class="t r" style="left:168.5px;top:405px;width:300px;color:#333;letter-spacing:-0.3px;">21,606</div>
<div class="t r" style="left:258px;top:405px;width:300px;color:#333;letter-spacing:-0.3px;">8.10</div>
<div class="t r" style="left:360px;top:405px;width:300px;color:#333;letter-spacing:-0.3px;">9.10</div>
<div class="t" style="left:563px;top:405px;color:#333;">X</div>
<div class="t" style="left:665px;top:405px;color:#333;">X</div>
<div class="t r" style="left:519px;top:405px;width:300px;letter-spacing:-0.2px;">21 AUG 20</div>
<div class="t r" style="left:664px;top:405px;width:300px;letter-spacing:-0.3px;">22.5</div>
<div class="t r" style="left:752px;top:405px;width:300px;color:#333;letter-spacing:-0.3px;">.90</div>
<div class="t r" style="left:854px;top:405px;width:300px;color:#333;letter-spacing:-0.3px;">1.00</div>
<div class="t r" style="left:968.5px;top:405px;width:300px;color:#333;letter-spacing:-0.3px;">107.74%</div>
<div class="t r" style="left:1069.5px;top:405px;width:300px;color:#333;letter-spacing:-0.3px;">-.14</div>
<div class="t r" style="left:1171.5px;top:405px;width:300px;color:#333;letter-spacing:-0.3px;">119</div>
<div class="t r" style="left:1272.5px;top:405px;width:300px;color:#333;letter-spacing:-0.3px;">1,010</div>
<div class="t" style="left:1057px;top:405px;color:#333;">E</div>
<div class="t" style="left:1159px;top:405px;color:#333;">N</div>
<div class="a" style="left:11px;top:422px;width:664px;height:15px;background:#fff4b4;"></div>
<div class="a" style="left:966px;top:422px;width:657px;height:15px;background:#004f73;"></div>
<div class="t r" style="left:-136.5px;top:421px;width:300px;color:#333;letter-spacing:-0.3px;">86.02%</div>
<div class="t r" style="left:-34.5px;top:421px;width:300px;color:#333;letter-spacing:-0.3px;">.81</div>
<div class="t r" style="left:67.5px;top:421px;width:300px;color:#333;letter-spacing:-0.3px;">104</div>
<div class="t r" style="left:168.5px;top:421px;width:300px;color:#333;letter-spacing:-0.3px;">2,955</div>
<div class="t r" style="left:258px;top:421px;width:300px;color:#333;letter-spacing:-0.3px;">6.40</div>
<div class="t r" style="left:360px;top:421px;width:300px;color:#333;letter-spacing:-0.3px;">7.10</div>
<div class="t" style="left:563px;top:421px;color:#333;">A</div>
<div class="t" style="left:665px;top:421px;color:#333;">X</div>
<div class="t r" style="left:519px;top:421px;width:300px;letter-spacing:-0.2px;">21 AUG 20</div>
<div class="t r" style="left:664px;top:421px;width:300px;letter-spacing:-0.3px;">25</div>
<div class="t r" style="left:752px;top:421px;width:300px;color:#f0f0f0;letter-spacing:-0.3px;">1.65</div>
<div class="t r" style="left:854px;top:421px;width:300px;color:#f0f0f0;letter-spacing:-0.3px;">1.80</div>
<div class="t r" style="left:968.5px;top:421px;width:300px;color:#f0f0f0;letter-spacing:-0.3px;">109.39%</div>
<div class="t r" style="left:1069.5px;top:421px;width:300px;color:#f0f0f0;letter-spacing:-0.3px;">-.23</div>
<div class="t r" style="left:1171.5px;top:421px;width:300px;color:#f0f0f0;letter-spacing:-0.3px;">455</div>
<div class="t r" style="left:1272.5px;top:421px;width:300px;color:#f0f0f0;letter-spacing:-0.3px;">3,252</div>
<div class="t" style="left:1057px;top:421px;color:#f0f0f0;">X</div>
<div class="t" style="left:1159px;top:421px;color:#f0f0f0;">A</div>
<div class="a" style="left:11px;top:438px;width:664px;height:15px;background:#fff4b4;"></div>
<div class="t r" style="left:-136.5px;top:437px;width:300px;color:#333;letter-spacing:-0.3px;">96.18%</div>
<div class="t r" style="left:-34.5px;top:437px;width:300px;color:#333;letter-spacing:-0.3px;">.59</div>
<div class="t r" style="left:67.5px;top:437px;width:300px;color:#333;letter-spacing:-0.3px;">814</div>
<div class="t r" style="left:168.5px;top:437px;width:300px;color:#333;letter-spacing:-0.3px;">3,038</div>
<div class="t r" style="left:258px;top:437px;width:300px;color:#333;letter-spacing:-0.3px;">4.00</div>
<div class="t r" style="left:360px;top:437px;width:300px;color:#333;letter-spacing:-0.3px;">4.30</div>
<div class="t" style="left:563px;top:437px;color:#333;">N</div>
<div class="t" style="left:665px;top:437px;color:#333;">B</div>
<div class="t r" style="left:519px;top:437px;width:300px;letter-spacing:-0.2px;">21 AUG 20</div>
<div class="t r" style="left:664px;top:437px;width:300px;letter-spacing:-0.3px;">30</div>
<div class="t r" style="left:752px;top:437px;width:300px;color:#333;letter-spacing:-0.3px;">3.90</div>
<div class="t r" style="left:854px;top:437px;width:300px;color:#333;letter-spacing:-0.3px;">4.10</div>
<div class="t r" style="left:968.5px;top:437px;width:300px;color:#333;letter-spacing:-0.3px;">110.40%</div>
<div class="t r" style="left:1069.5px;top:437px;width:300px;color:#333;letter-spacing:-0.3px;">-.40</div>
<div class="t r" style="left:1171.5px;top:437px;width:300px;color:#333;letter-spacing:-0.3px;">290</div>
<div class="t r" style="left:1272.5px;top:437px;width:300px;color:#333;letter-spacing:-0.3px;">8,437</div>
<div class="t" style="left:1057px;top:437px;color:#333;">X</div>
<div class="t" style="left:1159px;top:437px;color:#333;">E</div>
<div class="a" style="left:11px;top:454px;width:664px;height:15px;background:#004f73;"></div>
<div class="a" style="left:966px;top:454px;width:657px;height:15px;background:#fff4b4;"></div>
<div class="t r" style="left:-136.5px;top:453px;width:300px;color:#f0f0f0;letter-spacing:-0.3px;">98.11%</div>
<div class="t r" style="left:-34.5px;top:453px;width:300px;color:#f0f0f0;letter-spacing:-0.3px;">.40</div>
<div class="t r" style="left:67.5px;top:453px;width:300px;color:#f0f0f0;letter-spacing:-0.3px;">1,946</div>
<div class="t r" style="left:168.5px;top:453px;width:300px;color:#f0f0f0;letter-spacing:-0.3px;">8,415</div>
<div class="t r" style="left:258px;top:453px;width:300px;color:#f0f0f0;letter-spacing:-0.3px;">2.35</div>
<div class="t r" style="left:360px;top:453px;width:300px;color:#f0f0f0;letter-spacing:-0.3px;">2.40</div>
<div class="t" style="left:563px;top:453px;color:#f0f0f0;">C</div>
<div class="t" style="left:665px;top:453px;color:#f0f0f0;">H</div>
<div class="t r" style="left:519px;top:453px;width:300px;letter-spacing:-0.2px;">21 AUG 20</div>
<div class="t r" style="left:664px;top:453px;width:300px;letter-spacing:-0.3px;">35</div>
<div class="t r" style="left:752px;top:453px;width:300px;color:#333;letter-spacing:-0.3px;">7.10</div>
<div class="t r" style="left:854px;top:453px;width:300px;color:#333;letter-spacing:-0.3px;">7.50</div>
<div class="t r" style="left:968.5px;top:453px;width:300px;color:#333;letter-spacing:-0.3px;">114.47%</div>
<div class="t r" style="left:1069.5px;top:453px;width:300px;color:#333;letter-spacing:-0.3px;">-.56</div>
<div class="t r" style="left:1171.5px;top:453px;width:300px;color:#333;letter-spacing:-0.3px;">83</div>
<div class="t r" style="left:1272.5px;top:453px;width:300px;color:#333;letter-spacing:-0.3px;">1,962</div>
<div class="t" style="left:1057px;top:453px;color:#333;">A</div>
<div class="t" style="left:1159px;top:453px;color:#333;">X</div>
<div class="a" style="left:966px;top:470px;width:657px;height:15px;background:#fff4b4;"></div>
<div class="t r" style="left:-136.5px;top:469px;width:300px;color:#333;letter-spacing:-0.3px;">100.24%</div>
<div class="t r" style="left:-34.5px;top:469px;width:300px;color:#333;letter-spacing:-0.3px;">.26</div>
<div class="t r" style="left:67.5px;top:469px;width:300px;color:#333;letter-spacing:-0.3px;">2,702</div>
<div class="t r" style="left:168.5px;top:469px;width:300px;color:#333;letter-spacing:-0.3px;">19,465</div>
<div class="t r" style="left:258px;top:469px;width:300px;color:#333;letter-spacing:-0.3px;">1.30</div>
<div class="t r" style="left:360px;top:469px;width:300px;color:#333;letter-spacing:-0.3px;">1.40</div>
<div class="t" style="left:563px;top:469px;color:#333;">N</div>
<div class="t" style="left:665px;top:469px;color:#333;">X</div>
<div class="t r" style="left:519px;top:469px;width:300px;letter-spacing:-0.2px;">21 AUG 20</div>
<div class="t r" style="left:664px;top:469px;width:300px;letter-spacing:-0.3px;">40</div>
<div class="t r" style="left:752px;top:469px;width:300px;color:#333;letter-spacing:-0.3px;">11.00</div>
<div class="t r" style="left:854px;top:469px;width:300px;color:#333;letter-spacing:-0.3px;">11.70</div>
<div class="t r" style="left:968.5px;top:469px;width:300px;color:#333;letter-spacing:-0.3px;">122.17%</div>
<div class="t r" style="left:1069.5px;top:469px;width:300px;color:#333;letter-spacing:-0.3px;">-.67</div>
<div class="t r" style="left:1171.5px;top:469px;width:300px;color:#333;letter-spacing:-0.3px;">14</div>
<div class="t r" style="left:1272.5px;top:469px;width:300px;color:#333;letter-spacing:-0.3px;">578</div>
<div class="t" style="left:1057px;top:469px;color:#333;">E</div>
<div class="t" style="left:1159px;top:469px;color:#333;">E</div>
<div class="a" style="left:966px;top:486px;width:657px;height:15px;background:#fff4b4;"></div>
<div class="t r" style="left:-136.5px;top:485px;width:300px;color:#333;letter-spacing:-0.3px;">102.35%</div>
<div class="t r" style="left:-34.5px;top:485px;width:300px;color:#333;letter-spacing:-0.3px;">.16</div>
<div class="t r" style="left:67.5px;top:485px;width:300px;color:#333;letter-spacing:-0.3px;">8,878</div>
<div class="t r" style="left:168.5px;top:485px;width:300px;color:#333;letter-spacing:-0.3px;">7,211</div>
<div class="t r" style="left:258px;top:485px;width:300px;color:#333;letter-spacing:-0.3px;">.75</div>
<div class="t r" style="left:360px;top:485px;width:300px;color:#333;letter-spacing:-0.3px;">.80</div>
<div class="t" style="left:563px;top:485px;color:#333;">Q</div>
<div class="t" style="left:665px;top:485px;color:#333;">A</div>
<div class="t r" style="left:519px;top:485px;width:300px;letter-spacing:-0.2px;">21 AUG 20</div>
<div class="t r" style="left:664px;top:485px;width:300px;letter-spacing:-0.3px;">45</div>
<div class="t r" style="left:752px;top:485px;width:300px;color:#333;letter-spacing:-0.3px;">15.20</div>
<div class="t r" style="left:854px;top:485px;width:300px;color:#333;letter-spacing:-0.3px;">16.00</div>
<div class="t r" style="left:968.5px;top:485px;width:300px;color:#333;letter-spacing:-0.3px;">125.78%</div>
<div class="t r" style="left:1069.5px;top:485px;width:300px;color:#333;letter-spacing:-0.3px;">-.74</div>
<div class="t r" style="left:1171.5px;top:485px;width:300px;color:#333;letter-spacing:-0.3px;">1</div>
<div class="t r" style="left:1272.5px;top:485px;width:300px;color:#333;letter-spacing:-0.3px;">382</div>
<div class="t" style="left:1057px;top:485px;color:#333;">A</div>
<div class="t" style="left:1159px;top:485px;color:#333;">E</div>
<div class="a" style="left:966px;top:502px;width:657px;height:15px;background:#fff4b4;"></div>
<div class="t r" style="left:-136.5px;top:501px;width:300px;color:#333;letter-spacing:-0.3px;">104.18%</div>
<div class="t r" style="left:-34.5px;top:501px;width:300px;color:#333;letter-spacing:-0.3px;">.10</div>
<div class="t r" style="left:67.5px;top:501px;width:300px;color:#333;letter-spacing:-0.3px;">798</div>
<div class="t r" style="left:168.5px;top:501px;width:300px;color:#333;letter-spacing:-0.3px;">9,524</div>
<div class="t r" style="left:258px;top:501px;width:300px;color:#333;letter-spacing:-0.3px;">.40</div>
<div class="t r" style="left:360px;top:501px;width:300px;color:#333;letter-spacing:-0.3px;">.50</div>
<div class="t" style="left:563px;top:501px;color:#333;">N</div>
<div class="t" style="left:665px;top:501px;color:#333;">X</div>
<div class="t r" style="left:519px;top:501px;width:300px;letter-spacing:-0.2px;">21 AUG 20</div>
<div class="t r" style="left:664px;top:501px;width:300px;letter-spacing:-0.3px;">50</div>
<div class="t r" style="left:752px;top:501px;width:300px;color:#333;letter-spacing:-0.3px;">19.90</div>
<div class="t r" style="left:854px;top:501px;width:300px;color:#333;letter-spacing:-0.3px;">20.40</div>
<div class="t r" style="left:968.5px;top:501px;width:300px;color:#333;letter-spacing:-0.3px;">133.61%</div>
<div class="t r" style="left:1069.5px;top:501px;width:300px;color:#333;letter-spacing:-0.3px;">-.77</div>
<div class="t r" style="left:1171.5px;top:501px;width:300px;color:#333;letter-spacing:-0.3px;">0</div>
<div class="t r" style="left:1272.5px;top:501px;width:300px;color:#333;letter-spacing:-0.3px;">224</div>
<div class="t" style="left:1057px;top:501px;color:#333;">X</div>
<div class="t" style="left:1159px;top:501px;color:#333;">Q</div>
<div class="a" style="left:966px;top:518px;width:657px;height:15px;background:#fff4b4;"></div>
<div class="t r" style="left:-136.5px;top:517px;width:300px;color:#333;letter-spacing:-0.3px;">106.58%</div>
<div class="t r" style="left:-34.5px;top:517px;width:300px;color:#333;letter-spacing:-0.3px;">.07</div>
<div class="t r" style="left:67.5px;top:517px;width:300px;color:#333;letter-spacing:-0.3px;">719</div>
<div class="t r" style="left:168.5px;top:517px;width:300px;color:#333;letter-spacing:-0.3px;">5,164</div>
<div class="t r" style="left:258px;top:517px;width:300px;color:#333;letter-spacing:-0.3px;">.25</div>
<div class="t r" style="left:360px;top:517px;width:300px;color:#333;letter-spacing:-0.3px;">.30</div>
<div class="t" style="left:563px;top:517px;color:#333;">H</div>
<div class="t" style="left:665px;top:517px;color:#333;">B</div>
<div class="t r" style="left:519px;top:517px;width:300px;letter-spacing:-0.2px;">21 AUG 20</div>
<div class="t r" style="left:664px;top:517px;width:300px;letter-spacing:-0.3px;">55</div>
<div class="t r" style="left:752px;top:517px;width:300px;color:#333;letter-spacing:-0.3px;">24.80</div>
<div class="t r" style="left:854px;top:517px;width:300px;color:#333;letter-spacing:-0.3px;">25.50</div>
<div class="t r" style="left:968.5px;top:517px;width:300px;color:#333;letter-spacing:-0.3px;">156.80%</div>
<div class="t r" style="left:1069.5px;top:517px;width:300px;color:#333;letter-spacing:-0.3px;">-.75</div>
<div class="t r" style="left:1171.5px;top:517px;width:300px;color:#333;letter-spacing:-0.3px;">0</div>
<div class="t r" style="left:1272.5px;top:517px;width:300px;color:#333;letter-spacing:-0.3px;">26</div>
<div class="t" style="left:1057px;top:517px;color:#333;">B</div>
<div class="t" style="left:1159px;top:517px;color:#333;">B</div>
<div class="a" style="left:966px;top:534px;width:657px;height:15px;background:#fff4b4;"></div>
<div class="t r" style="left:-136.5px;top:533px;width:300px;color:#333;letter-spacing:-0.3px;">108.99%</div>
<div class="t r" style="left:-34.5px;top:533px;width:300px;color:#333;letter-spacing:-0.3px;">.04</div>
<div class="t r" style="left:67.5px;top:533px;width:300px;color:#333;letter-spacing:-0.3px;">520</div>
<div class="t r" style="left:168.5px;top:533px;width:300px;color:#333;letter-spacing:-0.3px;">4,205</div>
<div class="t r" style="left:258px;top:533px;width:300px;color:#333;letter-spacing:-0.3px;">.15</div>
<div class="t r" style="left:360px;top:533px;width:300px;color:#333;letter-spacing:-0.3px;">.20</div>
<div class="t" style="left:563px;top:533px;color:#333;">N</div>
<div class="t" style="left:665px;top:533px;color:#333;">A</div>
<div class="t r" style="left:519px;top:533px;width:300px;letter-spacing:-0.2px;">21 AUG 20</div>
<div class="t r" style="left:664px;top:533px;width:300px;letter-spacing:-0.3px;">60</div>
<div class="t r" style="left:752px;top:533px;width:300px;color:#333;letter-spacing:-0.3px;">29.30</div>
<div class="t r" style="left:854px;top:533px;width:300px;color:#333;letter-spacing:-0.3px;">31.10</div>
<div class="t r" style="left:968.5px;top:533px;width:300px;color:#333;letter-spacing:-0.3px;">181.91%</div>
<div class="t r" style="left:1069.5px;top:533px;width:300px;color:#333;letter-spacing:-0.3px;">-.72</div>
<div class="t r" style="left:1171.5px;top:533px;width:300px;color:#333;letter-spacing:-0.3px;">0</div>
<div class="t r" style="left:1272.5px;top:533px;width:300px;color:#333;letter-spacing:-0.3px;">34</div>
<div class="t" style="left:1057px;top:533px;color:#333;">Q</div>
<div class="t" style="left:1159px;top:533px;color:#333;">Q</div>
<div class="a" style="left:966px;top:550px;width:657px;height:16px;background:#fff4b4;"></div>
<div class="t r" style="left:-136.5px;top:550px;width:300px;color:#333;letter-spacing:-0.3px;">112.75%</div>
<div class="t r" style="left:-34.5px;top:550px;width:300px;color:#333;letter-spacing:-0.3px;">.03</div>
<div class="t r" style="left:67.5px;top:550px;width:300px;color:#333;letter-spacing:-0.3px;">722</div>
<div class="t r" style="left:168.5px;top:550px;width:300px;color:#333;letter-spacing:-0.3px;">7,661</div>
<div class="t r" style="left:258px;top:550px;width:300px;color:#333;letter-spacing:-0.3px;">.10</div>
<div class="t r" style="left:360px;top:550px;width:300px;color:#333;letter-spacing:-0.3px;">.15</div>
<div class="t" style="left:563px;top:550px;color:#333;">Z</div>
<div class="t" style="left:665px;top:550px;color:#333;">E</div>
<div class="t r" style="left:519px;top:550px;width:300px;letter-spacing:-0.2px;">21 AUG 20</div>
<div class="t r" style="left:664px;top:550px;width:300px;letter-spacing:-0.3px;">65</div>
<div class="t r" style="left:752px;top:550px;width:300px;color:#333;letter-spacing:-0.3px;">34.10</div>
<div class="t r" style="left:854px;top:550px;width:300px;color:#333;letter-spacing:-0.3px;">35.70</div>
<div class="t r" style="left:968.5px;top:550px;width:300px;color:#333;letter-spacing:-0.3px;">194.47%</div>
<div class="t r" style="left:1069.5px;top:550px;width:300px;color:#333;letter-spacing:-0.3px;">-.71</div>
<div class="t r" style="left:1171.5px;top:550px;width:300px;color:#333;letter-spacing:-0.3px;">3</div>
<div class="t r" style="left:1272.5px;top:550px;width:300px;color:#333;letter-spacing:-0.3px;">28</div>
<div class="t" style="left:1057px;top:550px;color:#333;">C</div>
<div class="t" style="left:1159px;top:550px;color:#333;">C</div>
<div class="a" style="left:11px;top:293px;width:1612px;height:1px;background:#e1e1e1;"></div>
<div class="a" style="left:11px;top:309px;width:1612px;height:1px;background:#e1e1e1;"></div>
<div class="a" style="left:11px;top:325px;width:1612px;height:1px;background:#e1e1e1;"></div>
<div class="a" style="left:11px;top:341px;width:1612px;height:1px;background:#e1e1e1;"></div>
<div class="a" style="left:11px;top:357px;width:1612px;height:1px;background:#e1e1e1;"></div>
<div class="a" style="left:11px;top:373px;width:1612px;height:1px;background:#e1e1e1;"></div>
<div class="a" style="left:11px;top:389px;width:1612px;height:1px;background:#e1e1e1;"></div>
<div class="a" style="left:11px;top:405px;width:1612px;height:1px;background:#e1e1e1;"></div>
<div class="a" style="left:11px;top:421px;width:1612px;height:1px;background:#e1e1e1;"></div>
<div class="a" style="left:11px;top:437px;width:1612px;height:1px;background:#e1e1e1;"></div>
<div class="a" style="left:11px;top:453px;width:1612px;height:1px;background:#e1e1e1;"></div>
<div class="a" style="left:11px;top:469px;width:1612px;height:1px;background:#e1e1e1;"></div>
<div class="a" style="left:11px;top:485px;width:1612px;height:1px;background:#e1e1e1;"></div>
<div class="a" style="left:11px;top:501px;width:1612px;height:1px;background:#e1e1e1;"></div>
<div class="a" style="left:11px;top:517px;width:1612px;height:1px;background:#e1e1e1;"></div>
<div class="a" style="left:11px;top:533px;width:1612px;height:1px;background:#e1e1e1;"></div>
<div class="a" style="left:11px;top:549px;width:1612px;height:1px;background:#e1e1e1;"></div>
<div class="a" style="left:38px;top:278px;width:1px;height:288px;background:#e1e1e1;"></div>
<div class="a" style="left:64px;top:278px;width:1px;height:288px;background:#e1e1e1;"></div>
<div class="a" style="left:166px;top:278px;width:1px;height:288px;background:#e1e1e1;"></div>
<div class="a" style="left:268px;top:278px;width:1px;height:288px;background:#e1e1e1;"></div>
<div class="a" style="left:370px;top:278px;width:1px;height:288px;background:#e1e1e1;"></div>
<div class="a" style="left:471px;top:278px;width:1px;height:288px;background:#e1e1e1;"></div>
<div class="a" style="left:559px;top:278px;width:1px;height:288px;background:#e1e1e1;"></div>
<div class="a" style="left:573px;top:278px;width:1px;height:288px;background:#e1e1e1;"></div>
<div class="a" style="left:661px;top:278px;width:1px;height:288px;background:#e1e1e1;"></div>
<div class="a" style="left:820px;top:278px;width:1px;height:288px;background:#e1e1e1;"></div>
<div class="a" style="left:1053px;top:278px;width:1px;height:288px;background:#e1e1e1;"></div>
<div class="a" style="left:1067px;top:278px;width:1px;height:288px;background:#e1e1e1;"></div>
<div class="a" style="left:1155px;top:278px;width:1px;height:288px;background:#e1e1e1;"></div>
<div class="a" style="left:1169px;top:278px;width:1px;height:288px;background:#e1e1e1;"></div>
<div class="a" style="left:1271px;top:278px;width:1px;height:288px;background:#e1e1e1;"></div>
<div class="a" style="left:1372px;top:278px;width:1px;height:288px;background:#e1e1e1;"></div>
<div class="a" style="left:1474px;top:278px;width:1px;height:288px;background:#e1e1e1;"></div>
<div class="a" style="left:1575px;top:278px;width:1px;height:288px;background:#e1e1e1;"></div>
<div class="a" style="left:1603px;top:278px;width:1px;height:288px;background:#e1e1e1;"></div>
<div class="a" style="left:11px;top:212px;width:1612px;height:1px;background:#fff;"></div>
<div class="a" style="left:11px;top:234px;width:1612px;height:1px;background:#fff;"></div>
<div class="a" style="left:11px;top:256px;width:1612px;height:1px;background:#fff;"></div>
<div class="a" style="left:38px;top:454px;width:1px;height:15px;background:#00405f;"></div>
<div class="a" style="left:64px;top:454px;width:1px;height:15px;background:#00405f;"></div>
<div class="a" style="left:166px;top:454px;width:1px;height:15px;background:#00405f;"></div>
<div class="a" style="left:268px;top:454px;width:1px;height:15px;background:#00405f;"></div>
<div class="a" style="left:370px;top:454px;width:1px;height:15px;background:#00405f;"></div>
<div class="a" style="left:471px;top:454px;width:1px;height:15px;background:#00405f;"></div>
<div class="a" style="left:559px;top:454px;width:1px;height:15px;background:#00405f;"></div>
<div class="a" style="left:573px;top:454px;width:1px;height:15px;background:#00405f;"></div>
<div class="a" style="left:661px;top:454px;width:1px;height:15px;background:#00405f;"></div>
<div class="a" style="left:11px;top:454px;width:664px;height:1px;background:#00456b;"></div>
<div class="a" style="left:1053px;top:422px;width:1px;height:15px;background:#00405f;"></div>
<div class="a" style="left:1067px;top:422px;width:1px;height:15px;background:#00405f;"></div>
<div class="a" style="left:1155px;top:422px;width:1px;height:15px;background:#00405f;"></div>
<div class="a" style="left:1169px;top:422px;width:1px;height:15px;background:#00405f;"></div>
<div class="a" style="left:1271px;top:422px;width:1px;height:15px;background:#00405f;"></div>
<div class="a" style="left:1372px;top:422px;width:1px;height:15px;background:#00405f;"></div>
<div class="a" style="left:1474px;top:422px;width:1px;height:15px;background:#00405f;"></div>
<div class="a" style="left:1575px;top:422px;width:1px;height:15px;background:#00405f;"></div>
<div class="a" style="left:1603px;top:422px;width:1px;height:15px;background:#00405f;"></div>
<div class="a" style="left:966px;top:422px;width:657px;height:1px;background:#00456b;"></div>
</body></html>
